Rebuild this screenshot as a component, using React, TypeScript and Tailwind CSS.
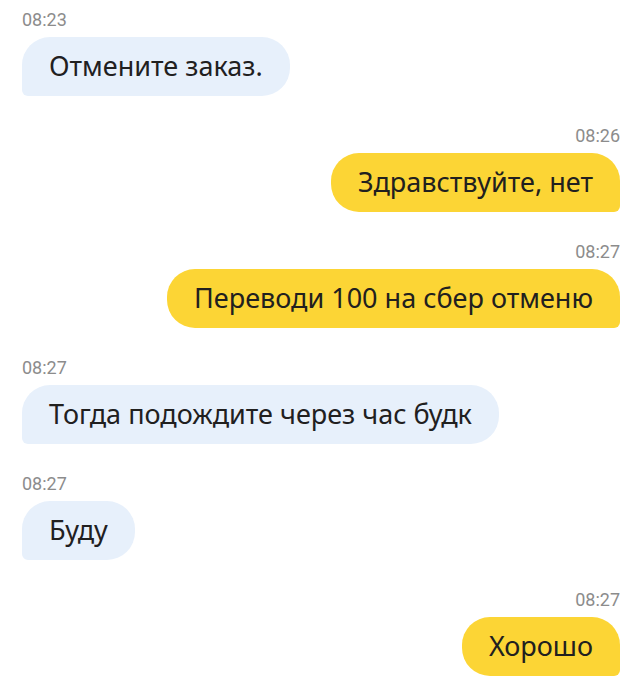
type Msg = { time: string; text: string; mine: boolean };

const messages: Msg[] = [
  { time: "08:23", text: "Отмените заказ.", mine: false },
  { time: "08:26", text: "Здравствуйте, нет", mine: true },
  { time: "08:27", text: "Переводи 100 на сбер отменю", mine: true },
  { time: "08:27", text: "Тогда подождите через час будк", mine: false },
  { time: "08:27", text: "Буду", mine: false },
  { time: "08:27", text: "Хорошо", mine: true },
];

const Bubble = ({ m }: { m: Msg }) => {
  return (
    <div className={`flex flex-col ${m.mine ? "items-end" : "items-start"}`}>
      <span className="text-[18px] leading-[16px] text-[#8c8c8c] font-['Roboto',sans-serif]">
        {m.time}
      </span>
      <div
        className={`mt-[9px] h-[59px] px-[27px] flex items-center text-[27px] text-[#21201f] rounded-[28px] ${
          m.mine ? "bg-[#fcd535] rounded-br-[6px]" : "bg-[#e7f0fb] rounded-bl-[6px]"
        }`}
      >
        {m.text}
      </div>
    </div>
  );
};

const App = () => {
  return (
    <div className="w-[640px] h-[680px] bg-white overflow-hidden pl-[22px] pr-[20px] pt-[12px] font-['Noto_Sans',sans-serif]">
      <div className="flex flex-col gap-[32px]">
        {messages.map((m, i) => (
          <Bubble key={i} m={m} />
        ))}
      </div>
    </div>
  );
};

export default App;
